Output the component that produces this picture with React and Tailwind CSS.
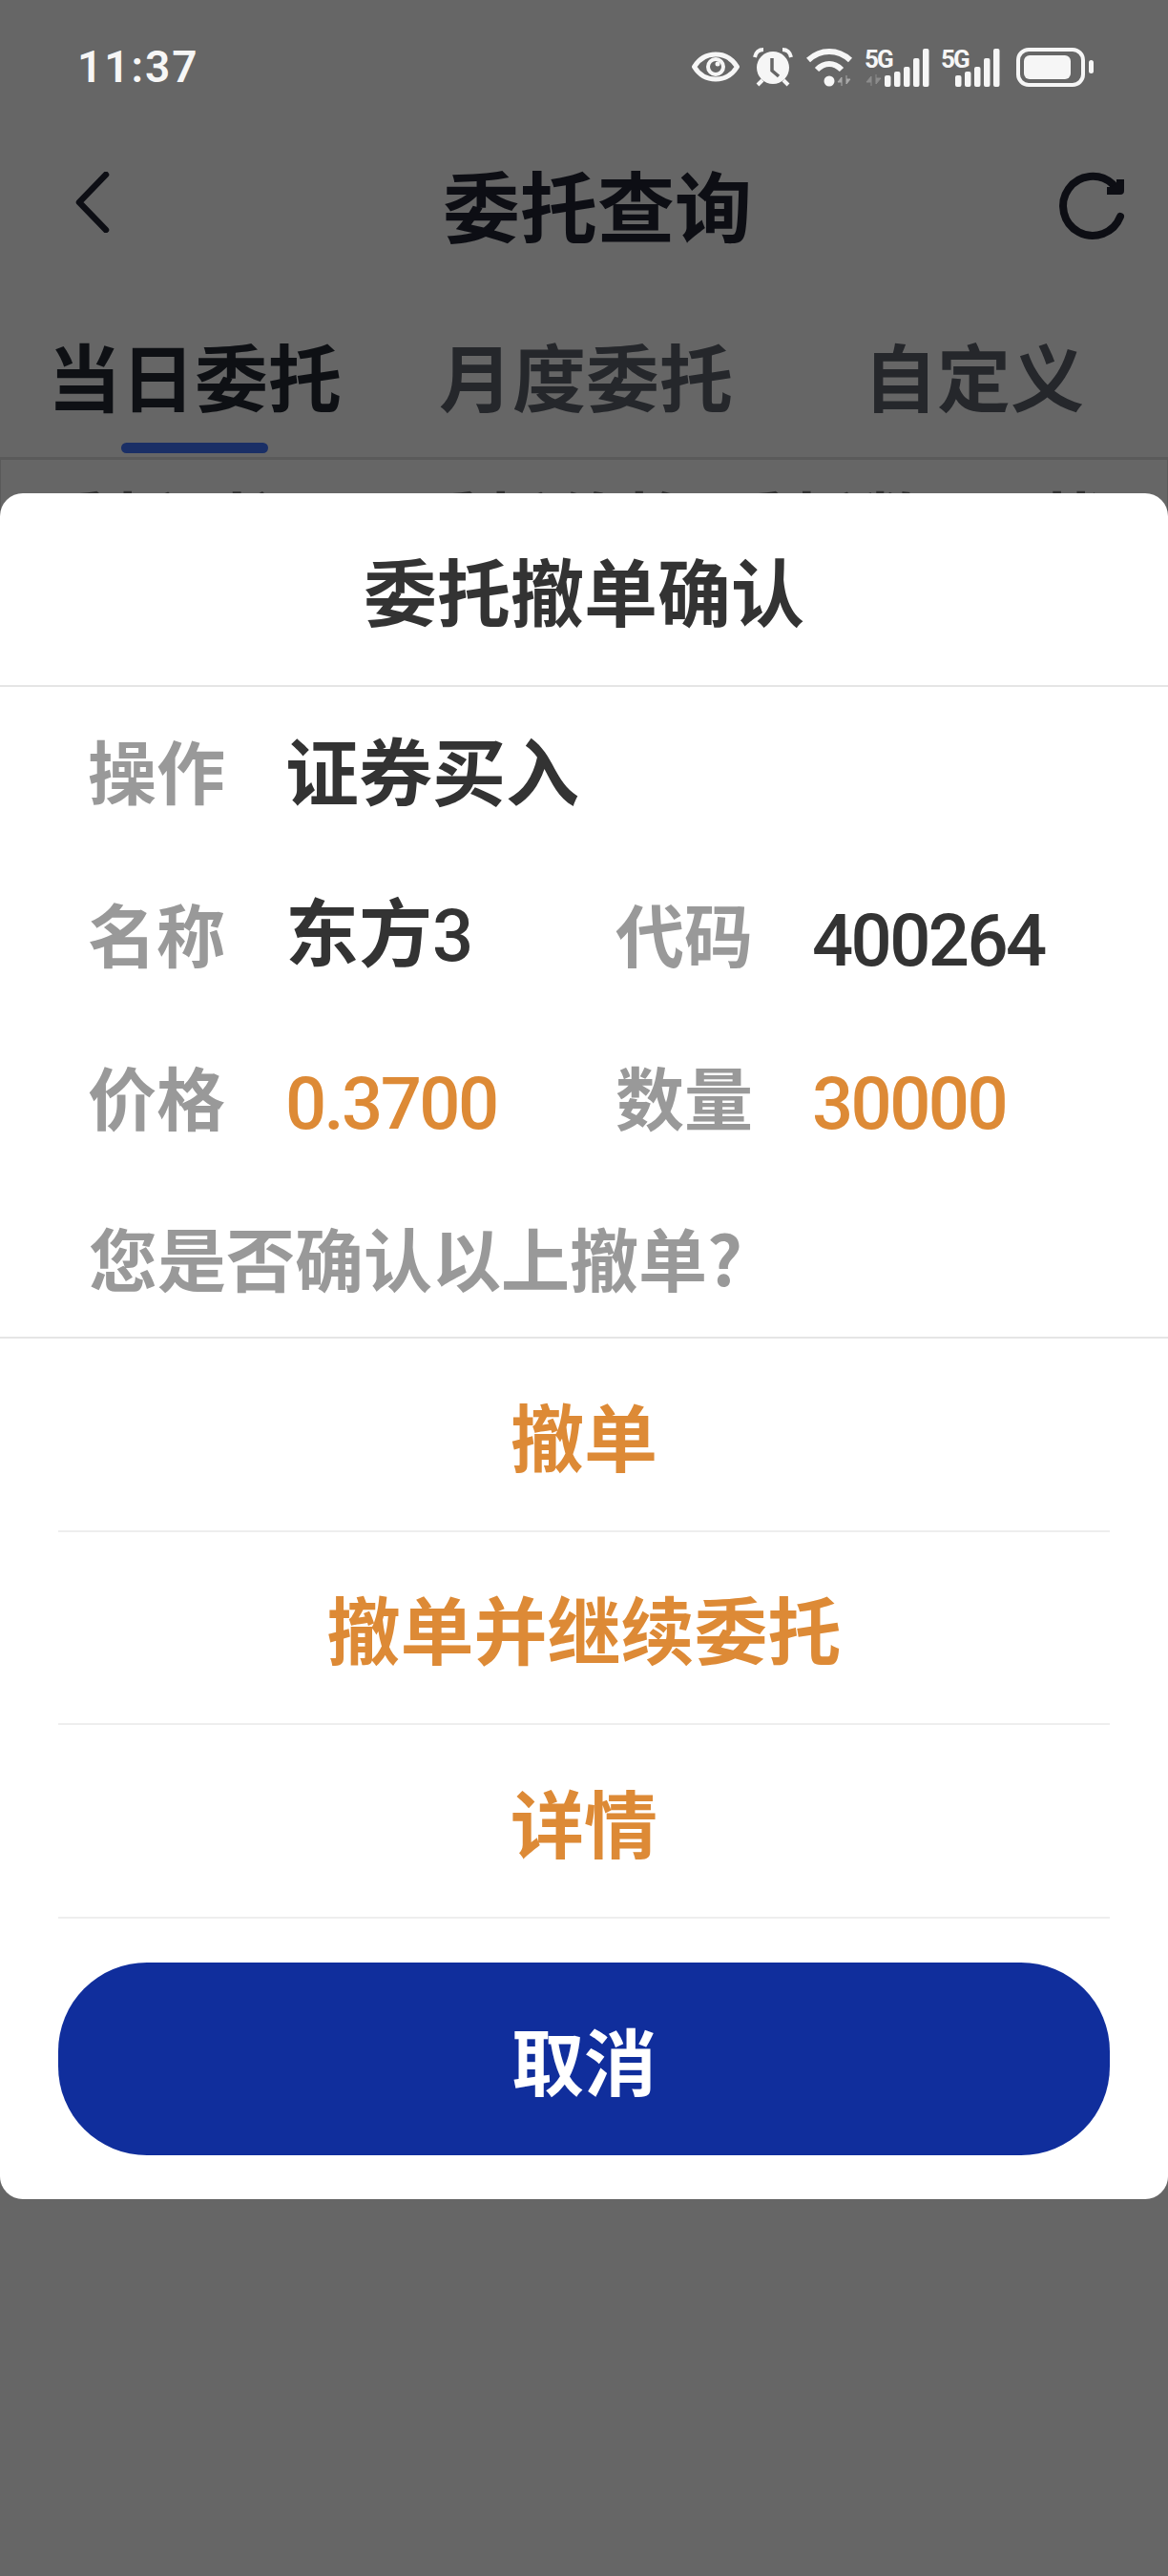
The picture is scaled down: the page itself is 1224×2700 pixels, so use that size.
const CJK = `font-['Noto_Sans_CJK_SC',sans-serif]`;

const EyeIcon = () => (
  <svg width="50" height="32" viewBox="0 0 50 32" fill="none">
    <path d="M2.5 16C8 7 16 3 25 3s17 4 22.500 13C42 25 34 29 25 29S8 25 2.500 16z" stroke="#f6f6f6" strokeWidth="5" strokeLinejoin="round" />
    <circle cx="25" cy="16" r="8" stroke="#f6f6f6" strokeWidth="4" />
    <circle cx="27" cy="13" r="2.5" fill="#f6f6f6" />
  </svg>
);

const AlarmIcon = () => (
  <svg width="42" height="41" viewBox="0 0 42 41" fill="none">
    <circle cx="21" cy="21" r="17" fill="#f6f6f6" />
    <path d="M2 10C3 5 6 2 11 2" stroke="#f6f6f6" strokeWidth="4" />
    <path d="M40 10C39 5 36 2 31 2" stroke="#f6f6f6" strokeWidth="4" />
    <path d="M10 34l-5 5M32 34l5 5" stroke="#f6f6f6" strokeWidth="4" />
    <path d="M20 11v13l7 6" stroke="#666666" strokeWidth="3.5" fill="none" />
  </svg>
);

const WifiIcon = () => (
  <svg width="52" height="41" viewBox="0 0 52 41" fill="none">
    <path d="M2 13C15 1 33 1 46 13" stroke="#f6f6f6" strokeWidth="6" />
    <path d="M11 23C19 15 29 15 37 23" stroke="#f6f6f6" strokeWidth="6" />
    <circle cx="24" cy="35" r="5.500" fill="#f6f6f6" />
    <path d="M37 40V31l-4 5h4M42 29v9l4-5h-4" fill="#aaaaaa" stroke="#aaaaaa" strokeWidth="1" />
  </svg>
);

// first SIM has data arrows under the 5G, so its bars sit further right
const Signal = ({ showArrows }) => {
  const start = showArrows ? 21 : 15;
  const bars = [
    [29, 12],
    [25, 16],
    [20, 21],
    [11, 30],
    [1, 40],
  ];
  return (
    <div className={showArrows ? "relative h-[41px] w-[68px]" : "relative h-[41px] w-[62px]"}>
      <svg width={start + 47} height="41" viewBox={`0 0 ${start + 47} 41`} fill="none">
        {showArrows && (
          <path d="M7 40V30l-5 6h5M12 28v10l5-6h-5" fill="#8c8c8c" stroke="#8c8c8c" strokeWidth="1" />
        )}
        {bars.map(([y, h], i) => (
          <rect key={i} x={start + i * 10} y={y} width="6.500" height={h} rx="2" fill="#f6f6f6" />
        ))}
      </svg>
      <span className="absolute left-0 top-[-1px] font-['Roboto',sans-serif] text-[26px] font-bold leading-[26px] tracking-[-2px] text-[#f6f6f6]">
        5G
      </span>
    </div>
  );
};

const BatteryIcon = () => (
  <svg width="82" height="41" viewBox="0 0 82 41" fill="none">
    <rect x="2" y="2" width="68" height="37" rx="11" stroke="#f6f6f6" strokeWidth="4" />
    <rect x="8" y="8" width="49" height="25" rx="6" fill="#f6f6f6" />
    <rect x="76" y="13" width="5" height="14" rx="2.5" fill="#f6f6f6" />
  </svg>
);

const RefreshIcon = () => (
  <svg width="100" height="90" viewBox="0 0 100 90" fill="none">
    <path d="M80 60A31 31 0 1 1 72 26" stroke="#0d0e14" strokeWidth="8" strokeLinecap="round" />
    <path d="M80 21v12H66" stroke="#0d0e14" strokeWidth="8" strokeLinejoin="round" fill="#0d0e14" />
  </svg>
);

const InfoCell = ({ label, value, valueClass }) => (
  <>
    <span className="text-[72px] font-bold text-[#999999]">{label}</span>
    <span className={valueClass}>{value}</span>
  </>
);

const numberText = "pt-[18px] font-['Roboto',sans-serif] text-[76px] font-medium tracking-[-2.6px]";

export default function App() {
  return (
    <div className={`relative h-[2700px] w-[1224px] overflow-hidden bg-[#666666] ${CJK}`}>
      {/* status bar */}
      <div className="flex h-[140px] items-center pl-[81px] pr-[77px]">
        <span className="font-['Roboto',sans-serif] text-[46px] font-semibold tracking-[2px] text-[#f6f6f6]">11:37</span>
        <div className="ml-auto flex items-center">
          <EyeIcon />
          <div className="ml-[14px]">
            <AlarmIcon />
          </div>
          <div className="ml-[14px]">
            <WifiIcon />
          </div>
          <div className="ml-[9px]">
            <Signal showArrows />
          </div>
          <div className="ml-[12px]">
            <Signal />
          </div>
          <div className="ml-[17px]">
            <BatteryIcon />
          </div>
        </div>
      </div>

      {/* header */}
      <div className="relative flex h-[154px] items-center pl-[79px]">
        <svg className="mb-[10px]" width="36" height="64" viewBox="0 0 36 64" fill="none">
          <path d="M32 3L4 32l28 29" stroke="#0d0e14" strokeWidth="6.5" strokeLinecap="round" strokeLinejoin="round" />
        </svg>
        <h1 className="mb-[10px] ml-[349px] text-[81px] font-bold leading-none text-[#0d0e14]">委托查询</h1>
        <div className="absolute left-[1094px] top-[27px]">
          <RefreshIcon />
        </div>
      </div>

      {/* tabs */}
      <div className="mt-[43px] flex items-start pl-[50px] text-[77px] font-bold leading-[112px] text-[#25272b]">
        <div className="flex flex-col items-center text-[#0e1014]">
          <span>当日委托</span>
          <div className="mt-[15px] h-[11px] w-[154px] rounded-full bg-[#1a2f66]" />
        </div>
        <span className="ml-[102px]">月度委托</span>
        <span className="ml-[137px]">自定义</span>
      </div>

      {/* table header, mostly behind the sheet */}
      <div className="mt-[4px] flex h-[200px] border-x border-t-[3px] border-[#5a5a5a] pl-[45px] pt-[27px] text-[72px] font-bold leading-none text-[#333333]">
        <span className="w-[415px]">委托时间</span>
        <span className="w-[340px]">委托价格</span>
        <span className="w-[350px]">委托数量</span>
        <span>状态</span>
      </div>

      {/* confirm sheet */}
      <div className="absolute left-0 top-[517px] h-[1788px] w-full rounded-[24px] bg-white">
        <div className="flex h-[203px] items-center justify-center border-b-2 border-[#e5e5e5] text-[77px] font-bold text-[#333333]">
          委托撤单确认
        </div>

        <div className="h-[681px]">
          <div className="grid grid-cols-[207px_346px_206px_1fr] grid-rows-[171px_171px_171px] items-center pl-[92px]">
            <InfoCell label="操作" value="证券买入" valueClass="text-[77px] font-bold text-[#333333]" />
            <span />
            <span />
            <InfoCell
              label="名称"
              value={
                <>
                  东方<span className="font-['Roboto',sans-serif] text-[76px] font-medium tracking-[-3px]">3</span>
                </>
              }
              valueClass="text-[77px] font-bold text-[#333333]"
            />
            <InfoCell label="代码" value="400264" valueClass={numberText + " text-[#333333]"} />
            <InfoCell label="价格" value="0.3700" valueClass={numberText + " text-[#dd8a36]"} />
            <InfoCell label="数量" value="30000" valueClass={numberText + " text-[#dd8a36]"} />
          </div>
          <div className="pl-[93px] pt-[25px] text-[72px] font-bold leading-[118px] text-[#999999]">您是否确认以上撤单?</div>
        </div>

        <div className="border-t-2 border-[#e5e5e5] text-[77px] font-bold text-[#dd8a36]">
          {["撤单", "撤单并继续委托", "详情"].map((label) => (
            <div key={label} className="mx-[61px] flex h-[202.67px] items-center justify-center border-b-2 border-[#eeeeee]">
              {label}
            </div>
          ))}
        </div>

        <div className="mx-[61px] mt-[46px] flex h-[202px] items-center justify-center rounded-[93px] bg-[#102e9c] text-[76px] font-bold text-white">
          取消
        </div>
      </div>
    </div>
  );
}
